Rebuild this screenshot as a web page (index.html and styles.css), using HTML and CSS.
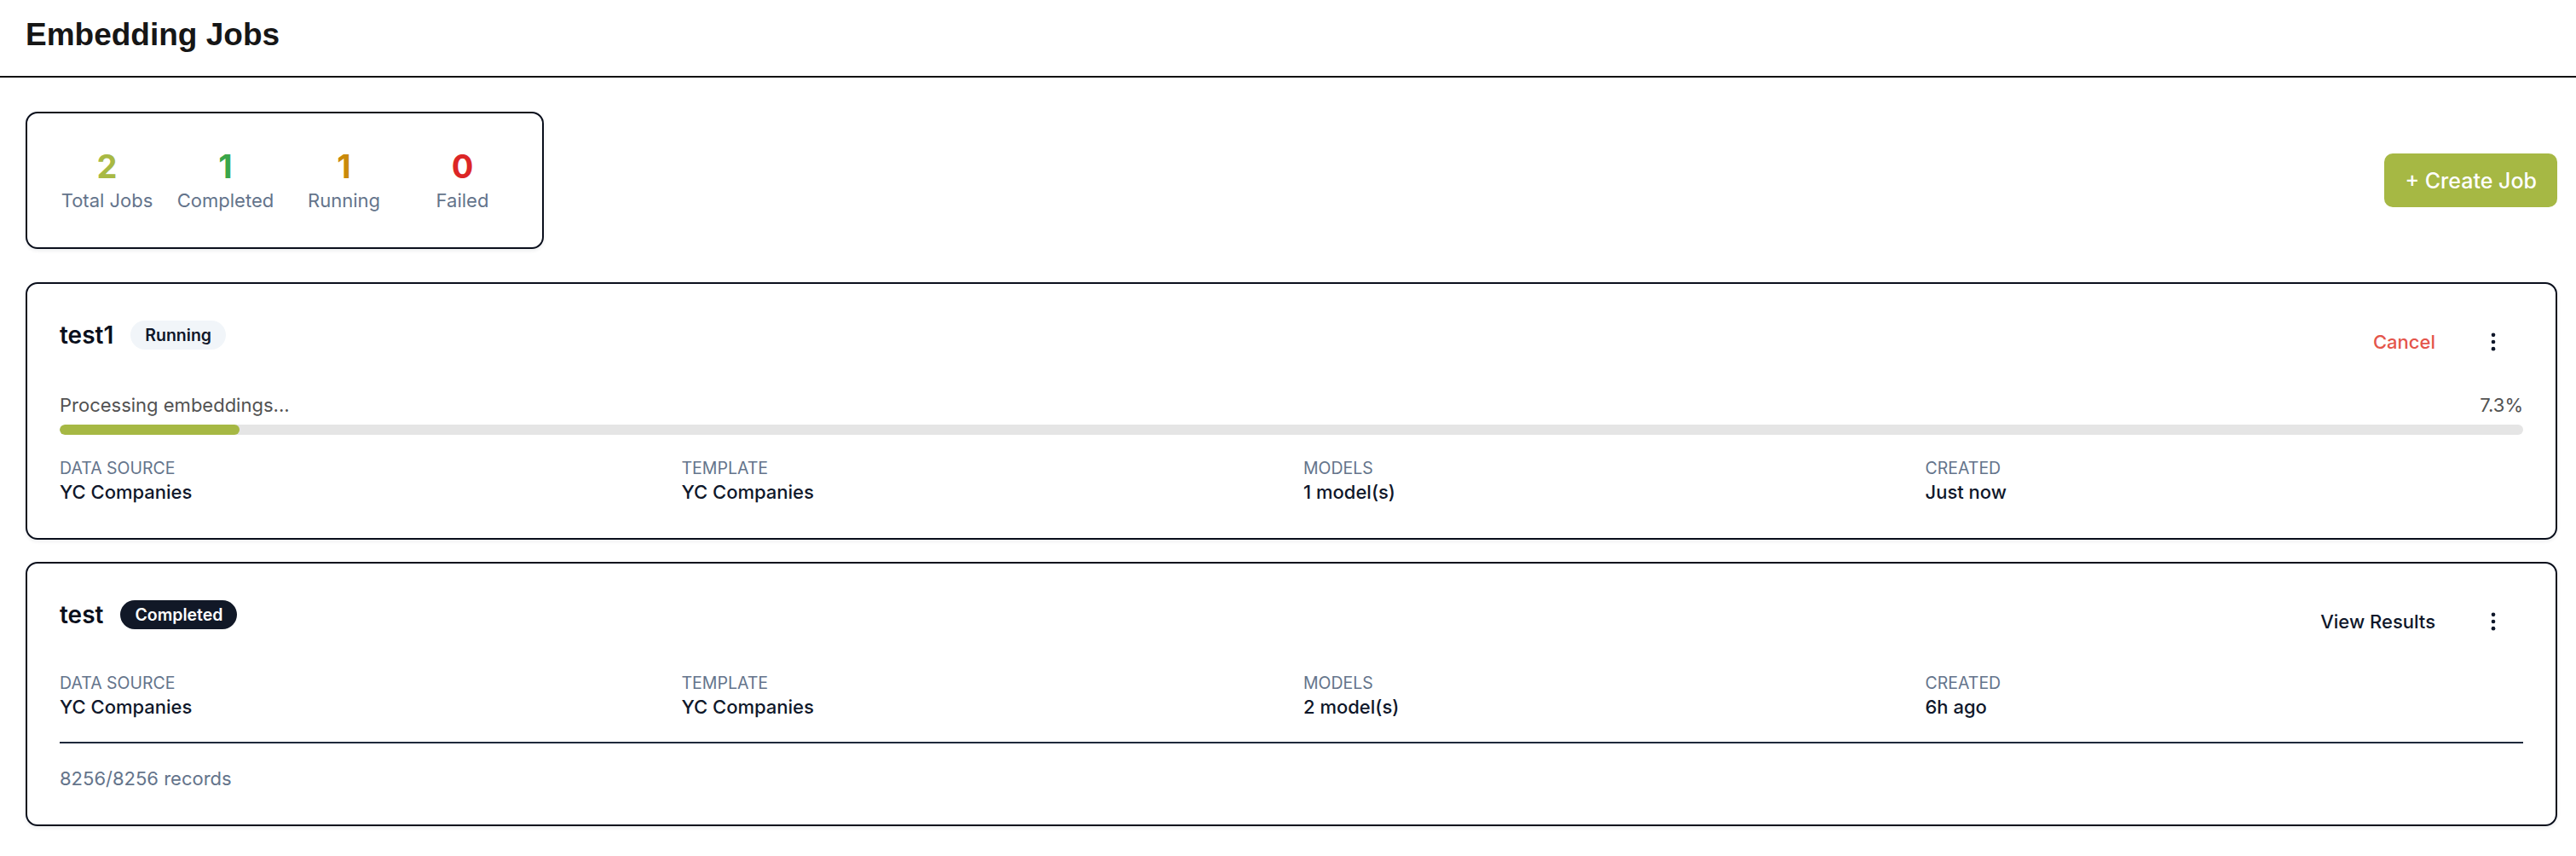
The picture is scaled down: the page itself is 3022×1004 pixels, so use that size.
FILE: index.html
```html
<!DOCTYPE html>
<html lang="en">
<head>
<meta charset="utf-8">
<title>Embedding Jobs</title>
<link rel="stylesheet" href="styles.css">
</head>
<body>
<header class="topbar">
  <h1 class="page-title">Embedding Jobs</h1>
</header>
<main class="main">
  <div class="toolbar">
    <div class="stats">
      <div class="stat">
        <div class="stat-num total">2</div>
        <div class="stat-label">Total Jobs</div>
      </div>
      <div class="stat">
        <div class="stat-num done">1</div>
        <div class="stat-label">Completed</div>
      </div>
      <div class="stat">
        <div class="stat-num running">1</div>
        <div class="stat-label">Running</div>
      </div>
      <div class="stat">
        <div class="stat-num failed">0</div>
        <div class="stat-label">Failed</div>
      </div>
    </div>
    <button class="create-btn">+ Create Job</button>
  </div>

  <section class="job-card">
    <div class="job-head">
      <div class="job-title-group">
        <span class="job-title">test1</span>
        <span class="badge badge-light">Running</span>
      </div>
      <div class="job-actions">
        <button class="action-btn danger">Cancel</button>
        <button class="kebab" aria-label="More">
          <svg viewBox="0 0 24 24" width="28" height="28"><circle cx="12" cy="5" r="2"/><circle cx="12" cy="12" r="2"/><circle cx="12" cy="19" r="2"/></svg>
        </button>
      </div>
    </div>
    <div class="progress">
      <div class="progress-row">
        <span>Processing embeddings...</span>
        <span>7.3%</span>
      </div>
      <div class="track"><div class="fill" style="width:7.3%"></div></div>
    </div>
    <div class="details">
      <div class="field"><div class="field-label">DATA SOURCE</div><div class="field-value">YC Companies</div></div>
      <div class="field"><div class="field-label">TEMPLATE</div><div class="field-value">YC Companies</div></div>
      <div class="field"><div class="field-label">MODELS</div><div class="field-value">1 model(s)</div></div>
      <div class="field"><div class="field-label">CREATED</div><div class="field-value">Just now</div></div>
    </div>
  </section>

  <section class="job-card">
    <div class="job-head">
      <div class="job-title-group">
        <span class="job-title">test</span>
        <span class="badge badge-dark">Completed</span>
      </div>
      <div class="job-actions">
        <button class="action-btn">View Results</button>
        <button class="kebab" aria-label="More">
          <svg viewBox="0 0 24 24" width="28" height="28"><circle cx="12" cy="5" r="2"/><circle cx="12" cy="12" r="2"/><circle cx="12" cy="19" r="2"/></svg>
        </button>
      </div>
    </div>
    <div class="details">
      <div class="field"><div class="field-label">DATA SOURCE</div><div class="field-value">YC Companies</div></div>
      <div class="field"><div class="field-label">TEMPLATE</div><div class="field-value">YC Companies</div></div>
      <div class="field"><div class="field-label">MODELS</div><div class="field-value">2 model(s)</div></div>
      <div class="field"><div class="field-label">CREATED</div><div class="field-value">6h ago</div></div>
    </div>
    <div class="job-foot">8256/8256 records</div>
  </section>
</main>
</body>
</html>
```

FILE: styles.css
```css
* { box-sizing: border-box; }

html, body {
  margin: 0;
  padding: 0;
  background: #ffffff;
}

body {
  font-family: Inter, "Noto Sans", sans-serif;
  color: #0f172a;
}

button {
  font-family: inherit;
  border: none;
  background: none;
  cursor: pointer;
  padding: 0;
  margin: 0;
}

.topbar {
  height: 91px;
  border-bottom: 2px solid #111111;
  padding: 23px 30px 0;
}

.page-title {
  margin: 0;
  font-family: "Liberation Sans", Arial, sans-serif;
  font-weight: 700;
  font-size: 37px;
  line-height: 36px;
  color: #161616;
}

.main {
  padding: 40px 22px 0 30px;
}

.toolbar {
  display: flex;
  justify-content: space-between;
  align-items: center;
  margin-bottom: 39px;
}

.stats {
  display: grid;
  grid-template-columns: repeat(4, 139px);
  width: 608px;
  padding: 42px 24px 41px;
  border: 2px solid #0a0f1c;
  border-radius: 14px;
  box-shadow: 0 2px 4px rgba(15, 23, 42, 0.08);
}

.stat {
  display: flex;
  flex-direction: column;
  align-items: center;
}

.stat-num {
  font-size: 38px;
  line-height: 40px;
  font-weight: 700;
}

.stat-num.total { color: #a8b944; }
.stat-num.done { color: #3aa64a; }
.stat-num.running { color: #ca8a0a; }
.stat-num.failed { color: #dc2626; }

.stat-label {
  margin-top: 6px;
  font-size: 22px;
  line-height: 28px;
  color: #64748b;
}

.create-btn {
  height: 63px;
  padding: 0 24px;
  border-radius: 10px;
  background: #a6b844;
  color: #ffffff;
  font-size: 25px;
  font-weight: 500;
}

.job-card {
  border: 2px solid #0a0f1c;
  border-radius: 14px;
  padding: 40px 38px 38px;
  margin-bottom: 26px;
  box-shadow: 0 2px 4px rgba(15, 23, 42, 0.08);
}

.job-head {
  display: flex;
  justify-content: space-between;
  align-items: flex-start;
  height: 56px;
}

.job-title-group {
  display: flex;
  align-items: center;
  gap: 20px;
  height: 40px;
}

.job-title {
  font-size: 28px;
  font-weight: 600;
  line-height: 40px;
  color: #0a0f1c;
}

.badge {
  display: inline-flex;
  align-items: center;
  height: 34px;
  padding: 0 17px;
  border-radius: 999px;
  font-size: 19.5px;
  font-weight: 600;
}

.badge-light {
  background: #f1f5f9;
  color: #0f172a;
}

.badge-dark {
  background: #111827;
  color: #ffffff;
}

.job-actions {
  display: flex;
  align-items: center;
}

.action-btn {
  height: 56px;
  padding: 0 33px 0 24px;
  font-size: 22px;
  font-weight: 500;
  color: #0f172a;
}

.action-btn.danger {
  color: #e4554b;
}

.kebab {
  width: 70px;
  height: 56px;
  display: flex;
  align-items: center;
  justify-content: center;
}

.kebab svg {
  fill: #0f172a;
}

.progress {
  margin-top: 30px;
}

.progress-row {
  display: flex;
  justify-content: space-between;
  font-size: 22px;
  line-height: 32px;
  color: #525252;
}

.track {
  margin-top: 7px;
  height: 12px;
  border-radius: 6px;
  background: #e5e5e5;
  overflow: hidden;
}

.fill {
  height: 100%;
  border-radius: 6px;
  background: #a6b844;
}

.details {
  display: grid;
  grid-template-columns: repeat(4, 1fr);
  gap: 28px;
  margin-top: 32px;
}

.progress + .details {
  margin-top: 27px;
}

.field-label {
  font-size: 19.5px;
  line-height: 24px;
  color: #64748b;
}

.field-value {
  font-size: 22px;
  line-height: 32px;
  font-weight: 500;
  color: #0f172a;
}

.job-foot {
  margin-top: 25px;
  padding-top: 25px;
  border-top: 2px solid #1e293b;
  font-size: 22px;
  line-height: 32px;
  color: #64748b;
}
```
